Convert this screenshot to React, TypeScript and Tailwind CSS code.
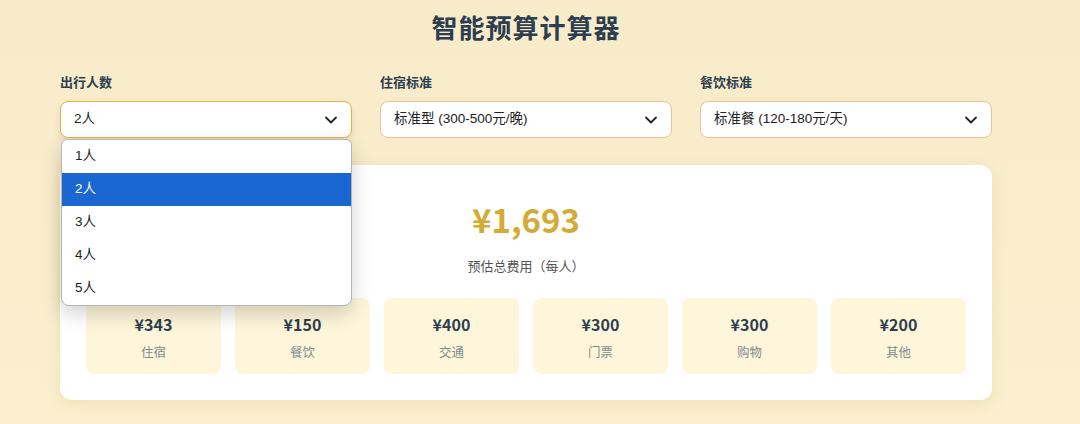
import React, {useState} from 'react'

const items = [
    {amount: "¥343", label: "住宿"},
    {amount: "¥150", label: "餐饮"},
    {amount: "¥400", label: "交通"},
    {amount: "¥300", label: "门票"},
    {amount: "¥300", label: "购物"},
    {amount: "¥200", label: "其他"},
]

const people = ["1人", "2人", "3人", "4人", "5人"]

const cjk = {fontFamily: '"Noto Sans CJK SC", sans-serif'}

function Chevron() {
    return (
        <svg width="16" height="16" viewBox="0 0 16 16" fill="none" className="absolute right-[12px] top-[10px]">
            <path d="M3 5.5l5 5 5-5" stroke="#222" strokeWidth="1.8" strokeLinecap="round" strokeLinejoin="round"/>
        </svg>
    )
}

function Field({label, value, focused, children}: {
    label: string,
    value: string,
    focused?: boolean,
    children?: React.ReactNode
}) {
    return (
        <div className="relative flex flex-col">
            <p className="text-[13px] font-bold text-[#2c3e50] h-[18px] leading-[18px] mb-[9px] mt-[74px]">{label}</p>
            <div className={`relative h-[37px] rounded-[8px] bg-white border px-[13px] flex items-center text-[13.5px] text-[#222]
                ${focused ? "border-[#dcb544] shadow-[0_4px_8px_rgba(0,0,0,0.08)]" : "border-[#e9c49a]"}`}>
                {value}
                <Chevron/>
            </div>
            {children}
        </div>
    )
}

export default function App() {
    const [selected] = useState("2人")

    return (
        <div className="w-[1080px] h-[424px] overflow-hidden bg-gradient-to-b from-[#f8ebc9] to-[#fbefcf]"
             style={{fontFamily: '"Liberation Sans", "Noto Sans CJK SC", sans-serif'}}>
            <div className="w-[932px] ml-[60px] relative">
                <h1 className="absolute left-0 right-0 top-[8px] text-center text-[26px] leading-[38px] font-bold text-[#2c3e50] tracking-[1px]"
                    style={{fontFamily: '"Noto Sans CJK SC", serif'}}>
                    智能预算计算器
                </h1>
                <div className="grid grid-cols-3 gap-[28px]">
                    <Field label="出行人数" value={selected} focused>
                        <div className="absolute z-10 left-[1px] right-0 top-[139px] bg-white rounded-b-[8px] rounded-t-[6px] border border-[#b5b5b5] shadow-[0_8px_20px_rgba(0,0,0,0.18)] overflow-hidden">
                            {people.map(p =>
                                <div key={p}
                                     className={`h-[33px] px-[13px] flex items-center text-[13.5px]
                                        ${p == selected ? "bg-[#1a67d2] text-white" : "text-[#222]"}`}>
                                    {p}
                                </div>)}
                        </div>
                    </Field>
                    <Field label="住宿标准" value="标准型 (300-500元/晚)"/>
                    <Field label="餐饮标准" value="标准餐 (120-180元/天)"/>
                </div>

                <div className="mt-[27px] h-[235px] bg-white rounded-[12px] shadow-[0_4px_14px_rgba(210,180,110,0.25)] px-[26px] pt-[30px]">
                    <p className="text-center text-[33px] leading-[48px] font-bold text-[#d4ab35]" style={cjk}>¥1,693</p>
                    <p className="text-center text-[13px] text-[#555] mt-[15px] leading-[18px]">预估总费用（每人）</p>
                    <div className="grid grid-cols-6 gap-[14px] mt-[22px]">
                        {items.map((it, i) =>
                            <div key={i} className="h-[76px] rounded-[8px] bg-[#fef6da] flex flex-col items-center pt-[15px]">
                                <p className="text-[16px] font-bold text-[#2c3e50] leading-[22px]" style={cjk}>{it.amount}</p>
                                <p className="text-[12.5px] text-[#7f8c8d] mt-[9px] leading-[18px]">{it.label}</p>
                            </div>)}
                    </div>
                </div>
            </div>
        </div>
    )
}
